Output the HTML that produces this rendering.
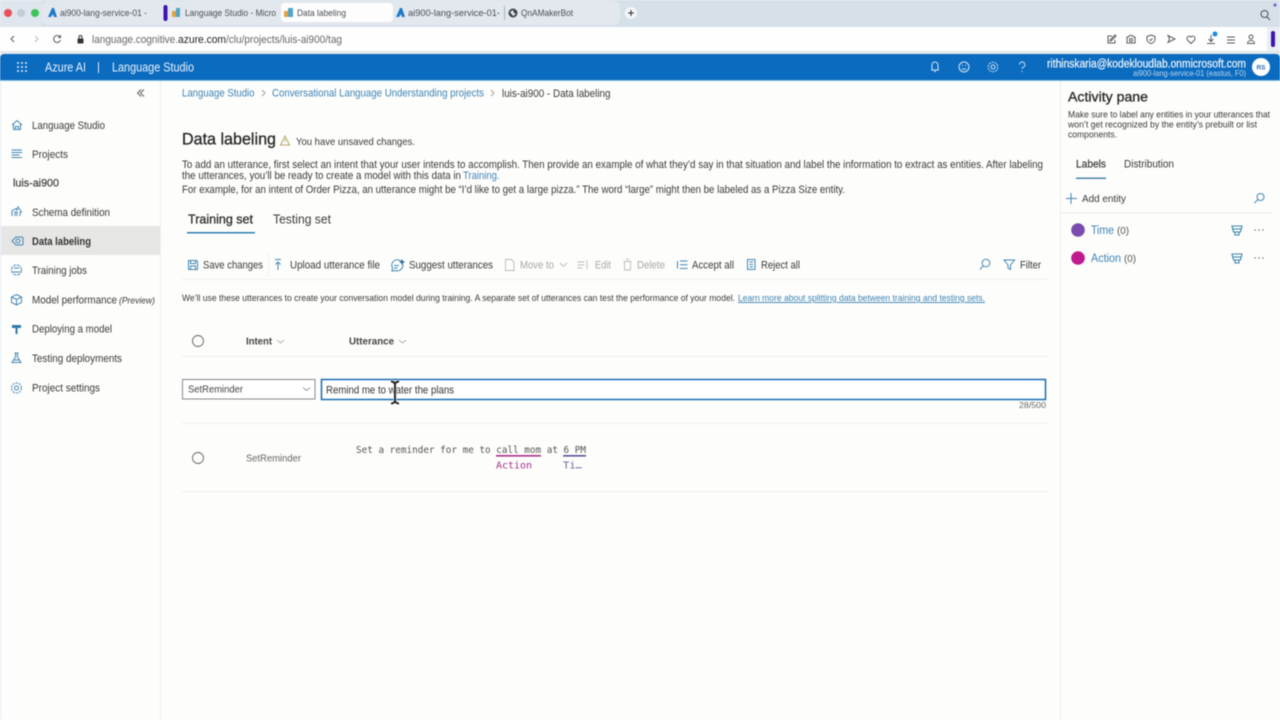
<!DOCTYPE html>
<html lang="en"><head><meta charset="utf-8"><title>Data labeling</title>
<style>
html,body{margin:0;padding:0;background:#fdfdfb;width:1280px;height:720px;overflow:hidden}
svg{display:block;filter:blur(.4px)}
text{font-family:"Liberation Sans",sans-serif;font-size:11px;fill:#3a3a3a;white-space:pre}
.s{stroke:#3a3a3a;stroke-width:.2px}
.tab{font-size:9.6px;fill:#4a4f55}
.lnk{fill:#3d83b5}
.dis{fill:#a8a8a8}
.mono{font-family:"DejaVu Sans Mono","Liberation Mono",monospace;font-size:9.3px;fill:#555}
.w{fill:#e8f1fa}
.ic{fill:none;stroke:#4286b5;stroke-width:1}
.gi{fill:none;stroke:#555b60;stroke-width:1}
.wi{fill:none;stroke:#d5e6f6;stroke-width:1}
.ln{stroke:#efefed;stroke-width:1}
</style></head><body>
<svg width="1280" height="720" viewBox="0 0 1280 720" xmlns="http://www.w3.org/2000/svg">
<rect width="1280" height="720" fill="#fdfdfb"/>
<!-- browser chrome -->
<rect width="1280" height="27" fill="#d6e0e9"/>
<rect x="0" y="0" width="42" height="27" fill="#dfe6ed"/>
<rect x="42" y="1" width="578" height="24" rx="6" fill="#e2e8ee"/>
<rect x="281" y="3" width="112" height="19" rx="4" fill="#fdfdfd"/>
<circle cx="8" cy="13" r="4" fill="#e8505b"/><circle cx="21" cy="13" r="4" fill="#c3ccd4"/><circle cx="35" cy="13" r="4" fill="#3fc45a"/>
<path d="M48 17l4-9h2l3 9h-3l-1-3-2 3z" fill="#1f78c8"/>
<rect x="163.500" y="5" width="4" height="16" rx="2" fill="#3a14b4"/>
<g><rect x="172" y="11" width="5" height="6" fill="#e2a33e"/><rect x="176" y="8" width="4" height="9" fill="#4ea6c8"/></g>
<g><rect x="284" y="11" width="5" height="6" fill="#e2a33e"/><rect x="288" y="8" width="5" height="9" fill="#4ea6c8"/></g>
<path d="M396 17l4-9h2l3 9h-3l-1-3-2 3z" fill="#1f78c8"/>
<rect x="504" y="6" width="1" height="14" fill="#aab3bb"/>
<circle cx="513" cy="13" r="4.500" fill="#3c434a"/><path d="M510 12l3-2 1 3 2 1-3 2z" fill="#dfe6ed"/>
<text class="tab" x="60" y="16" textLength="87" lengthAdjust="spacingAndGlyphs">ai900-lang-service-01 -</text>
<text class="tab" x="185" y="16" textLength="91" lengthAdjust="spacingAndGlyphs">Language Studio - Micro</text>
<text class="tab" x="297" y="16" textLength="49" lengthAdjust="spacingAndGlyphs">Data labeling</text>
<text class="tab" x="408" y="16" textLength="92" lengthAdjust="spacingAndGlyphs">ai900-lang-service-01-</text>
<text class="tab" x="521" y="16" textLength="52" lengthAdjust="spacingAndGlyphs">QnAMakerBot</text>
<circle cx="631" cy="13" r="6" fill="#f4f6f8"/><path d="M628 13h6M631 10v6" stroke="#333" stroke-width="1.100"/>
<circle cx="1264.500" cy="14" r="3.500" fill="none" stroke="#4a4f55"/><path d="M1267 17l3 3" stroke="#4a4f55"/>
<circle cx="1275" cy="5" r="1.500" fill="#6a5ad0"/>
<!-- address bar -->
<rect x="0" y="27" width="1267" height="24" rx="6" fill="#fefefe"/>
<rect x="1267" y="27" width="13" height="27" fill="#e9eef3"/>
<rect x="0" y="51" width="1280" height="3" fill="#e4e9ee"/>
<path d="M14 36l-3 3 3 3" class="gi"/><path d="M35 36l3 3-3 3" fill="none" stroke="#bbb"/>
<path d="M60 37a3.500 3.500 0 1 0 .5 3M60.500 35v2.500h-2.500" class="gi"/>
<rect x="77.500" y="38.500" width="6" height="5" rx="1" fill="#333"/><path d="M79 38.500v-1.500a1.500 1.500 0 0 1 3 0v1.500" fill="none" stroke="#333"/>
<text x="92" y="43" textLength="86" lengthAdjust="spacingAndGlyphs" style="fill:#666">language.cognitive.</text>
<text x="178" y="43" textLength="48" lengthAdjust="spacingAndGlyphs" style="fill:#222">azure.com</text>
<text x="226" y="43" textLength="116" lengthAdjust="spacingAndGlyphs" style="fill:#666">/clu/projects/luis-ai900/tag</text>
<g class="gi">
<path d="M1112 36h-4v7h7v-3M1110 40l5-5 1 1-5 5h-1z"/>
<path d="M1127 37h1.500l1-1.500h3l1 1.500h1.500v6h-8z"/><circle cx="1131" cy="40" r="1.500"/>
<path d="M1151 35l4 1.500v3c0 2-2 3.500-4 4-2-.5-4-2-4-4v-3zM1149.500 39.500l1 1 2-2"/>
<path d="M1168 35.500l7 3.500-7 3.500 1.500-3.500z"/>
<path d="M1191 43.500l-3.500-3.500a2.300 2.300 0 0 1 3.500-3 2.300 2.300 0 0 1 3.500 3z"/>
<path d="M1211 35v6M1208.500 39l2.500 2.500 2.500-2.500M1207 43.500h8"/>
<path d="M1227 37h8M1227 40h8M1227 43h8"/>
<circle cx="1251" cy="37" r="2"/><path d="M1247.500 43.500c0-4 7-4 7 0z"/>
</g>
<circle cx="1215" cy="34" r="2.500" fill="#1d8ae0"/>
<rect x="1271" y="31" width="4" height="16" rx="2" fill="#3a14b4"/>
<!-- top blue header -->
<path d="M0 58a4 4 0 0 1 4-4h1272a4 4 0 0 1 4 4v22H0z" fill="#0b6bbf"/>
<rect y="80" width="1280" height="1" fill="#7fc0e6"/>
<g fill="#dbe9f6"><circle cx="18" cy="63" r="1"/><circle cx="22" cy="63" r="1"/><circle cx="26" cy="63" r="1"/><circle cx="18" cy="67" r="1"/><circle cx="22" cy="67" r="1"/><circle cx="26" cy="67" r="1"/><circle cx="18" cy="71" r="1"/><circle cx="22" cy="71" r="1"/><circle cx="26" cy="71" r="1"/></g>
<text class="w" x="45" y="71.500" textLength="41" lengthAdjust="spacingAndGlyphs" style="font-size:12.500px">Azure AI</text>
<rect x="98" y="62" width="1" height="11" fill="#dbe9f6"/>
<text class="w" x="112" y="71.500" textLength="82" lengthAdjust="spacingAndGlyphs" style="font-size:12.500px">Language Studio</text>
<g class="wi">
<path d="M932 70v-5a3 3 0 0 1 6 0v5zM931 70h8M934 71.500h2"/>
<circle cx="964" cy="67" r="5"/><path d="M962 68.500c1 1.200 3 1.200 4 0"/><path d="M962 65.500h1M965 65.500h1"/>
<circle cx="993" cy="67" r="2"/><circle cx="993" cy="67" r="4.800" stroke-dasharray="2 1"/>
<path d="M1019.500 64.500a2.700 2.700 0 1 1 3.500 2.800c-.6.3-.9.800-.9 1.700"/>
</g>
<circle cx="1022" cy="71.500" r=".6" fill="#d5e6f6"/>
<text x="1047" y="67.500" textLength="199" lengthAdjust="spacingAndGlyphs" style="font-size:11.500px;fill:#f2f7fc;stroke:#f2f7fc;stroke-width:.2px">rithinskaria@kodekloudlab.onmicrosoft.com</text>
<text x="1133" y="76" textLength="113" lengthAdjust="spacingAndGlyphs" style="font-size:8.300px;fill:#b9d6ef">ai900-lang-service-01 (eastus, F0)</text>
<circle cx="1261" cy="67" r="9" fill="#fff"/>
<text x="1256.500" y="69.500" textLength="9" lengthAdjust="spacingAndGlyphs" style="font-size:6.500px;fill:#2a6cae;font-weight:bold">RS</text>
<!-- sidebar -->
<rect x="0" y="81" width="1" height="639" fill="#e3eef6"/>
<rect x="160" y="81" width="1" height="639" fill="#eeeeec"/>
<rect x="1" y="226" width="159" height="29" fill="#e6e6e5"/>
<path d="M141 89.500l-3.500 3.500 3.500 3.500M144 89.500l-3.500 3.500 3.500 3.500" fill="none" stroke="#555" stroke-width=".9"/>
<g class="ic">
<path d="M12 125l5-4.500 5 4.500M13.500 124v5.500h7V124M15.500 129.500v-3h3v3"/>
<path d="M11.500 150h10.500M11.500 152.500h10.500M11.500 155h8M11.500 157.500h10.500"/>
<path d="M12 216v-5l4-2.500 1 1.500 1-3 3.500 5-1.500.5v3.500M15 216v-4h2v4"/>
<path d="M12 241l4-4h6l1 .5v7l-1 .5h-6z"/><circle cx="18" cy="241" r="2"/>
<circle cx="16.500" cy="270" r="5" stroke-dasharray="3 1"/><path d="M13 272h7M14 268h5"/>
<path d="M16.500 294.500l5 2.500v5.500l-5 2.500-5-2.500V297zM11.500 297l5 2.500 5-2.500M16.500 299.500v6"/>
<circle cx="16.500" cy="388" r="2"/><circle cx="16.500" cy="388" r="5" stroke-dasharray="2.200 1"/>
<path d="M14.500 353h4M15.500 353v4l-3.500 5.500h9l-3.500-5.500v-4M13.500 360h6"/>
</g>
<path d="M12 325h9v3h-9zM15.500 328h2v6h-2z" fill="#3079ab"/>
<text x="32" y="129" textLength="73" lengthAdjust="spacingAndGlyphs">Language Studio</text>
<text x="32" y="158" textLength="36" lengthAdjust="spacingAndGlyphs">Projects</text>
<text class="s" x="13" y="186.500" textLength="46" lengthAdjust="spacingAndGlyphs">luis-ai900</text>
<text x="32" y="216" textLength="78" lengthAdjust="spacingAndGlyphs">Schema definition</text>
<text x="32" y="245" textLength="59" lengthAdjust="spacingAndGlyphs" style="font-weight:bold;fill:#333">Data labeling</text>
<text x="32" y="274" textLength="55" lengthAdjust="spacingAndGlyphs">Training jobs</text>
<text x="32" y="303.500" textLength="85" lengthAdjust="spacingAndGlyphs">Model performance</text>
<text x="119" y="303.500" textLength="36" lengthAdjust="spacingAndGlyphs" style="font-size:8.800px;font-style:italic">(Preview)</text>
<text x="32" y="332.500" textLength="80" lengthAdjust="spacingAndGlyphs">Deploying a model</text>
<text x="32" y="362" textLength="90" lengthAdjust="spacingAndGlyphs">Testing deployments</text>
<text x="32" y="391.500" textLength="68" lengthAdjust="spacingAndGlyphs">Project settings</text>
<!-- breadcrumb -->
<text class="lnk" x="182" y="96.500" textLength="72.500" lengthAdjust="spacingAndGlyphs">Language Studio</text>
<path d="M262 90l3 3-3 3" fill="none" stroke="#888" stroke-width=".8"/>
<text class="lnk" x="272" y="96.500" textLength="212" lengthAdjust="spacingAndGlyphs">Conversational Language Understanding projects</text>
<path d="M491 90l3 3-3 3" fill="none" stroke="#888" stroke-width=".8"/>
<text x="502" y="97" textLength="108.500" lengthAdjust="spacingAndGlyphs">luis-ai900 - Data labeling</text>
<!-- heading -->
<text x="182" y="144.500" textLength="94" lengthAdjust="spacingAndGlyphs" style="font-size:17px;fill:#262626;stroke:#262626;stroke-width:.3px">Data labeling</text>
<path d="M285 136l4.500 9h-9z" fill="none" stroke="#b8a66e"/><path d="M285 139v3" stroke="#b8a66e" stroke-width=".8"/>
<text x="296" y="145" textLength="119" lengthAdjust="spacingAndGlyphs" style="font-size:10.500px">You have unsaved changes.</text>
<text x="182" y="168" textLength="861" lengthAdjust="spacingAndGlyphs" style="font-size:10.700px">To add an utterance, first select an intent that your user intends to accomplish. Then provide an example of what they’d say in that situation and label the information to extract as entities. After labeling</text>
<text x="182" y="179" textLength="279" lengthAdjust="spacingAndGlyphs" style="font-size:10.700px">the utterances, you’ll be ready to create a model with this data in</text>
<text class="lnk" x="463" y="179" textLength="36.500" lengthAdjust="spacingAndGlyphs" style="font-size:10.700px">Training.</text>
<text x="182" y="193" textLength="663" lengthAdjust="spacingAndGlyphs" style="font-size:10.700px">For example, for an intent of Order Pizza, an utterance might be “I’d like to get a large pizza.” The word “large” might then be labeled as a Pizza Size entity.</text>
<!-- tabs -->
<text x="188" y="223.500" textLength="65" lengthAdjust="spacingAndGlyphs" style="font-size:12.800px;fill:#2b2b2b;stroke:#2b2b2b;stroke-width:.3px">Training set</text>
<text x="273" y="223.500" textLength="58" lengthAdjust="spacingAndGlyphs" style="font-size:12.800px">Testing set</text>
<rect x="187" y="232" width="68" height="1.500" fill="#2d80b3"/>
<!-- toolbar -->
<g class="ic">
<path d="M188.500 260.500h8l1 1v8h-9zM190.500 260.500v3h5v-3M190.500 269.500v-3.500h5v3.500"/>
<path d="M275 259.500h6M278 270v-8M275.500 264.500l2.500-2.500 2.500 2.500"/>
<path d="M392 271l.5-3a5.500 5.500 0 1 1 3 2.500zM394 265.500h5M394 268h3.500"/>
<path d="M677.500 261v7.500M680 261h7.500M680 264.700h7.500M680 268.500h7.500"/>
<path d="M747.500 259.500h7.500v10h-7.500zM749.500 262h3.500M749.500 264.500h3.500M749.500 267h3.500"/>
</g>
<path d="M402 259l1 2 2 1-2 1-1 2-1-2-2-1 2-1z" fill="#2d6f9e"/>
<g fill="none" stroke="#bbb" stroke-width=".9">
<path d="M505.500 259.500h6l2.500 2.500v8.500h-8.500z"/>
<path d="M560 263l3.500 3.500 3.500-3.500"/>
<path d="M577.500 262h7M577.500 265h7M577.500 268h5M587 260v9"/>
<path d="M623.500 261.500h8M624.500 261.500v8.500h6v-8.500M626 259.500h3"/>
</g>
<text x="203" y="268.500" textLength="60" lengthAdjust="spacingAndGlyphs">Save changes</text>
<rect x="268" y="253" width="1" height="24" fill="#f1f1ef"/>
<text x="290" y="268.500" textLength="90" lengthAdjust="spacingAndGlyphs">Upload utterance file</text>
<text x="409" y="268.500" textLength="84" lengthAdjust="spacingAndGlyphs">Suggest utterances</text>
<text class="dis" x="520" y="268.500" textLength="34" lengthAdjust="spacingAndGlyphs">Move to</text>
<text class="dis" x="595" y="268.500" textLength="16" lengthAdjust="spacingAndGlyphs">Edit</text>
<text class="dis" x="637" y="268.500" textLength="28" lengthAdjust="spacingAndGlyphs">Delete</text>
<text x="692" y="268.500" textLength="42" lengthAdjust="spacingAndGlyphs">Accept all</text>
<text x="761" y="268.500" textLength="39" lengthAdjust="spacingAndGlyphs">Reject all</text>
<g class="ic"><circle cx="986" cy="263" r="3.800"/><path d="M983 266l-3 3.500"/><path d="M1004 260h10.500l-4 5v4.500l-2.500-1.500v-3z"/></g>
<text x="1020" y="268.500" textLength="21" lengthAdjust="spacingAndGlyphs">Filter</text>
<line class="ln" x1="182" y1="279.500" x2="1047" y2="279.500"/>
<text x="182" y="301" textLength="553" lengthAdjust="spacingAndGlyphs" style="font-size:9.200px">We’ll use these utterances to create your conversation model during training. A separate set of utterances can test the performance of your model.</text>
<text class="lnk" x="738" y="301" textLength="247" lengthAdjust="spacingAndGlyphs" style="font-size:9.200px;text-decoration:underline">Learn more about splitting data between training and testing sets.</text>
<!-- table head -->
<circle cx="198" cy="341" r="5.500" fill="none" stroke="#666" stroke-width=".9"/>
<text x="246" y="344.500" textLength="26" lengthAdjust="spacingAndGlyphs" style="font-size:10.500px;font-weight:bold;fill:#444">Intent</text>
<path d="M277 340l3.500 3 3.500-3" fill="none" stroke="#999" stroke-width=".8"/>
<text x="349" y="344.500" textLength="45" lengthAdjust="spacingAndGlyphs" style="font-size:10.500px;font-weight:bold;fill:#444">Utterance</text>
<path d="M399 340l3.500 3 3.500-3" fill="none" stroke="#999" stroke-width=".8"/>
<line class="ln" x1="182" y1="356.500" x2="1047" y2="356.500"/>
<!-- input row -->
<rect x="182.500" y="379.500" width="132.500" height="19.500" fill="#fff" stroke="#8a8a8a"/>
<text x="188" y="392.500" textLength="55" lengthAdjust="spacingAndGlyphs" style="font-size:10.500px;fill:#444">SetReminder</text>
<path d="M303 387.500l3.500 3 3.500-3" fill="none" stroke="#777" stroke-width=".8"/>
<rect x="321.500" y="379.500" width="724" height="20" fill="#fff" stroke="#1a6cb3" stroke-width="1.500"/>
<text x="326" y="393.500" textLength="128" lengthAdjust="spacingAndGlyphs" style="font-size:10.700px;fill:#333">Remind me to water the plans</text>
<text x="1019" y="408" textLength="27" lengthAdjust="spacingAndGlyphs" style="font-size:8.300px;fill:#666">28/500</text>
<line class="ln" x1="182" y1="423.500" x2="1047" y2="423.500"/>
<!-- I-beam cursor -->
<path d="M391 381.500c2 0 3 .8 4 2 1-1.200 2-2 4-2M395 383v18M391 403.500c2 0 3-.8 4-2 1 1.200 2 2 4 2" fill="none" stroke="#e8e8e8" stroke-width="3.500" opacity=".85"/>
<path d="M391 381.500c2 0 3 .8 4 2 1-1.200 2-2 4-2M395 383v18M391 403.500c2 0 3-.8 4-2 1 1.200 2 2 4 2" fill="none" stroke="#111" stroke-width="1.700"/>
<!-- row -->
<circle cx="198" cy="458" r="5.500" fill="none" stroke="#666" stroke-width=".9"/>
<text x="246" y="461.500" textLength="55" lengthAdjust="spacingAndGlyphs" style="font-size:10.500px;fill:#666">SetReminder</text>
<text class="mono" x="356" y="453" textLength="230" lengthAdjust="spacingAndGlyphs">Set a reminder for me to call mom at 6 PM</text>
<rect x="496" y="455" width="45" height="1.600" fill="#a8308c"/>
<rect x="563" y="455" width="23" height="1.600" fill="#5e4f94"/>
<text class="mono" x="496" y="468.500" textLength="36" lengthAdjust="spacingAndGlyphs" style="font-size:10px;fill:#a3308a">Action</text>
<text class="mono" x="563" y="468.500" textLength="19" lengthAdjust="spacingAndGlyphs" style="font-size:10px;fill:#6f6398">Ti…</text>
<line class="ln" x1="182" y1="491.500" x2="1047" y2="491.500"/>
<!-- activity pane -->
<rect x="1060" y="81" width="1" height="639" fill="#eeeeec"/>
<text x="1068" y="101.500" textLength="80" lengthAdjust="spacingAndGlyphs" style="font-size:13.500px;fill:#262626;stroke:#262626;stroke-width:.3px">Activity pane</text>
<text x="1068" y="117.500" textLength="202" lengthAdjust="spacingAndGlyphs" style="font-size:9.200px">Make sure to label any entities in your utterances that</text>
<text x="1068" y="127.500" textLength="189" lengthAdjust="spacingAndGlyphs" style="font-size:9.200px">won’t get recognized by the entity’s prebuilt or list</text>
<text x="1068" y="137.500" textLength="49" lengthAdjust="spacingAndGlyphs" style="font-size:9.200px">components.</text>
<text x="1076" y="167.500" textLength="30" lengthAdjust="spacingAndGlyphs" class="s">Labels</text>
<text x="1124" y="167.500" textLength="50" lengthAdjust="spacingAndGlyphs">Distribution</text>
<rect x="1076" y="177.500" width="30" height="1.500" fill="#4a86a8"/>
<path d="M1071 193v11M1066 198.500h11" stroke="#3f86ba" stroke-width="1" fill="none"/>
<text x="1082" y="202" textLength="44" lengthAdjust="spacingAndGlyphs" style="font-size:10.500px">Add entity</text>
<g class="ic"><circle cx="1260.500" cy="197" r="3.500"/><path d="M1258 199.500l-3.500 3.500"/></g>
<line class="ln" x1="1061" y1="213" x2="1273" y2="213"/>
<circle cx="1078" cy="230" r="6.800" fill="#7a4cb0"/>
<text class="lnk" x="1091" y="234" textLength="23" lengthAdjust="spacingAndGlyphs" style="font-size:11.500px">Time</text>
<text x="1117" y="234" textLength="12" lengthAdjust="spacingAndGlyphs" style="font-size:10.500px;fill:#555">(0)</text>
<circle cx="1078" cy="258" r="6.800" fill="#bf1a8e"/>
<text class="lnk" x="1091" y="262" textLength="30" lengthAdjust="spacingAndGlyphs" style="font-size:11.500px">Action</text>
<text x="1124" y="262" textLength="12" lengthAdjust="spacingAndGlyphs" style="font-size:10.500px;fill:#555">(0)</text>
<g fill="none" stroke="#3a86b0" stroke-width="1.100">
<path d="M1232 226h10l-1.500 6h-7zM1233 229h8M1235 232.500v2.500h4v-2.500"/>
<path d="M1232 254h10l-1.500 6h-7zM1233 257h8M1235 260.500v2.500h4v-2.500"/>
</g>
<g fill="#777"><circle cx="1255" cy="230" r=".8"/><circle cx="1259" cy="230" r=".8"/><circle cx="1263" cy="230" r=".8"/><circle cx="1255" cy="258" r=".8"/><circle cx="1259" cy="258" r=".8"/><circle cx="1263" cy="258" r=".8"/></g>
</svg>
</body></html>
